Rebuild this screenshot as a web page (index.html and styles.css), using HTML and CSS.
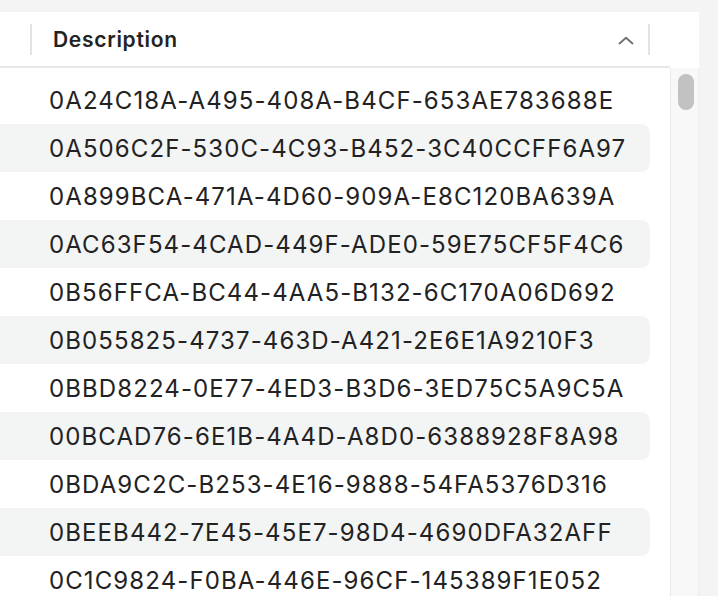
FILE: index.html
```html
<!DOCTYPE html>
<html>
<head>
<meta charset="utf-8">
<link rel="stylesheet" href="styles.css">
</head>
<body>
<div class="panel">
  <div class="header">
    <div class="hcells">
      <span class="divider"></span>
      <span class="htitle">Description</span>
      <svg class="chev" width="16" height="9" viewBox="0 0 16 9"><path d="M1.5 7.5 L8 1.8 L14.5 7.5" fill="none" stroke="#6e6e6e" stroke-width="1.8" stroke-linecap="round" stroke-linejoin="round"/></svg>
      <span class="divider"></span>
    </div>
    <div class="hspace"></div>
  </div>
  <div class="body">
    <div class="rows">
      <div class="row">0A24C18A-A495-408A-B4CF-653AE783688E</div>
      <div class="row">0A506C2F-530C-4C93-B452-3C40CCFF6A97</div>
      <div class="row">0A899BCA-471A-4D60-909A-E8C120BA639A</div>
      <div class="row">0AC63F54-4CAD-449F-ADE0-59E75CF5F4C6</div>
      <div class="row">0B56FFCA-BC44-4AA5-B132-6C170A06D692</div>
      <div class="row">0B055825-4737-463D-A421-2E6E1A9210F3</div>
      <div class="row">0BBD8224-0E77-4ED3-B3D6-3ED75C5A9C5A</div>
      <div class="row">00BCAD76-6E1B-4A4D-A8D0-6388928F8A98</div>
      <div class="row">0BDA9C2C-B253-4E16-9888-54FA5376D316</div>
      <div class="row">0BEEB442-7E45-45E7-98D4-4690DFA32AFF</div>
      <div class="row">0C1C9824-F0BA-446E-96CF-145389F1E052</div>
    </div>
    <div class="scroll"><div class="thumb"></div></div>
  </div>
</div>
</body>
</html>
```
FILE: styles.css
```css
* { box-sizing: border-box; }
html, body { margin: 0; padding: 0; }
body {
  background: #f4f4f4;
  width: 718px;
  height: 596px;
  overflow: hidden;
  font-family: Inter, "Noto Sans", sans-serif;
  color: #222222;
}
.panel {
  margin-top: 12px;
  width: 699px;
  height: 584px;
  background: #ffffff;
  display: flex;
  flex-direction: column;
  overflow: hidden;
}
.header {
  display: flex;
  height: 56px;
  flex: 0 0 56px;
}
.hcells {
  flex: 0 0 670px;
  display: flex;
  align-items: center;
  border-bottom: 2px solid #e8e8e8;
  padding: 0 20px 0 30px;
}
.hspace { flex: 1; }
.divider {
  width: 2px;
  height: 31px;
  background: #e3e3e3;
}
.htitle {
  margin-left: 21px;
  font-size: 21px;
  font-weight: 600;
  letter-spacing: 0.7px;
  color: #232323;
  flex: 1;
}
.chev {
  margin-right: 14px;
  margin-top: 2px;
}
.body {
  display: flex;
  flex: 1;
  min-height: 0;
}
.rows {
  flex: 0 0 670px;
  padding: 8px 20px 0 0;
  overflow: hidden;
}
.row {
  height: 48px;
  display: flex;
  align-items: center;
  padding-left: 49px;
  font-size: 24px;
  letter-spacing: 1.1px;
  color: #222222;
  white-space: nowrap;
}
.row:nth-child(even) {
  background: #f3f4f4;
  border-radius: 0 9px 9px 0;
}
.scroll {
  flex: 0 0 29px;
  background: #f8f8f8;
  border-left: 1px solid #e9e9e9;
  border-right: 1px solid #eeeeee;
  padding: 6px 4px 0 7px;
}
.thumb {
  width: 16px;
  height: 36px;
  border-radius: 8px;
  background: #c2c2c2;
}
```
